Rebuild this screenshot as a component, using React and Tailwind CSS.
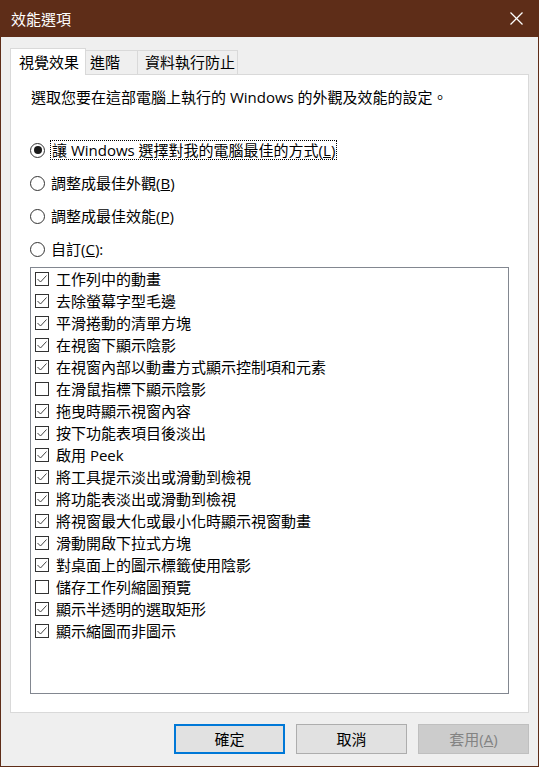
import React from "react";

const items = [
  ["工作列中的動畫", true],
  ["去除螢幕字型毛邊", true],
  ["平滑捲動的清單方塊", true],
  ["在視窗下顯示陰影", true],
  ["在視窗內部以動畫方式顯示控制項和元素", true],
  ["在滑鼠指標下顯示陰影", false],
  ["拖曳時顯示視窗內容", true],
  ["按下功能表項目後淡出", true],
  ["啟用 Peek", true],
  ["將工具提示淡出或滑動到檢視", true],
  ["將功能表淡出或滑動到檢視", true],
  ["將視窗最大化或最小化時顯示視窗動畫", true],
  ["滑動開啟下拉式方塊", true],
  ["對桌面上的圖示標籤使用陰影", true],
  ["儲存工作列縮圖預覽", false],
  ["顯示半透明的選取矩形", true],
  ["顯示縮圖而非圖示", true],
];

function Radio({ checked }) {
  return (
    <div className="w-[15px] h-[15px] rounded-full border border-[#333333] bg-white flex items-center justify-center shrink-0">
      {checked && <div className="w-[8px] h-[8px] rounded-full bg-[#1a1a1a]" />}
    </div>
  );
}

function Check({ checked }) {
  return (
    <div className="w-[14px] h-[14px] border border-[#333333] bg-white shrink-0 flex items-center justify-center">
      {checked && (
        <svg width="12" height="12" viewBox="0 0 12 12">
          <polyline points="1.5,6 4.5,9 10.5,2.5" fill="none" stroke="#444444" strokeWidth="1" />
        </svg>
      )}
    </div>
  );
}

export default function App() {
  return (
    <div className="w-[539px] h-[767px] bg-[#5e2d18] flex flex-col px-px pb-px font-['Open_Sans','Noto_Sans_CJK_TC',sans-serif] text-[15px] text-black">
      {/* Title bar */}
      <div className="h-[37px] flex items-center justify-between pl-[10px] pr-[15px] text-white shrink-0">
        <span className="leading-[20px]">效能選項</span>
        <svg width="13" height="13" viewBox="0 0 13 13">
          <line x1="0.5" y1="0.5" x2="12.5" y2="12.5" stroke="#ffffff" strokeWidth="1.2" />
          <line x1="12.5" y1="0.5" x2="0.5" y2="12.5" stroke="#ffffff" strokeWidth="1.2" />
        </svg>
      </div>
      {/* Body */}
      <div className="flex-1 bg-[#efefef] flex flex-col pt-[11px] px-[9px]">
        {/* Tabs */}
        <div className="h-[26px] flex items-end shrink-0">
          <div className="relative z-10 h-[27px] -mb-px w-[76px] bg-white border-l border-t border-r border-[#d9d9d9] flex items-start pt-[4px] pl-[8px] leading-[18px]">
            視覺效果
          </div>
          <div className="h-[24px] w-[52px] border-t border-r border-[#d9d9d9] bg-[#efefef] pl-[4px] pt-[2px] leading-[18px]">
            進階
          </div>
          <div className="h-[24px] w-[100px] border-t border-r border-[#d9d9d9] bg-[#efefef] pl-[7px] pt-[2px] leading-[18px]">
            資料執行防止
          </div>
        </div>
        {/* Panel */}
        <div className="h-[639px] bg-white border border-[#d9d9d9] flex flex-col pl-[19px] pt-[12px] shrink-0">
          <div className="ml-px leading-[20px] h-[20px] whitespace-nowrap">
            選取您要在這部電腦上執行的 Windows 的外觀及效能的設定。
          </div>
          <div className="mt-[33px] flex flex-col gap-[13px]">
            <div className="h-[20px] flex items-center gap-[5px]">
              <Radio checked />
              <span className="border border-dotted border-black px-px leading-[18px] h-[20px] whitespace-nowrap">
                讓 Windows 選擇對我的電腦最佳的方式(<u>L</u>)
              </span>
            </div>
            <div className="h-[20px] flex items-center gap-[6px]">
              <Radio />
              <span className="leading-[20px]">
                調整成最佳外觀(<u>B</u>)
              </span>
            </div>
            <div className="h-[20px] flex items-center gap-[6px]">
              <Radio />
              <span className="leading-[20px]">
                調整成最佳效能(<u>P</u>)
              </span>
            </div>
            <div className="h-[20px] flex items-center gap-[6px]">
              <Radio />
              <span className="leading-[20px]">
                自訂(<u>C</u>):
              </span>
            </div>
          </div>
          <div className="mt-[8px] w-[479px] h-[427px] border border-[#828790] bg-white flex flex-col">
            {items.map(([label, on]) => (
              <div key={label} className="h-[22px] flex items-center pl-[4px] gap-[7px] shrink-0">
                <Check checked={on} />
                <span className="leading-[20px] whitespace-nowrap">{label}</span>
              </div>
            ))}
          </div>
        </div>
        {/* Buttons */}
        <div className="mt-[11px] flex justify-end gap-[11px]">
          <button className="w-[111px] h-[30px] bg-[#e1e1e1] border-2 border-[#0078d7] leading-[20px]">
            確定
          </button>
          <button className="w-[111px] h-[30px] bg-[#e1e1e1] border border-[#adadad] leading-[20px]">
            取消
          </button>
          <button className="w-[111px] h-[30px] bg-[#cccccc] border border-[#bfbfbf] text-[#838383] leading-[20px]">
            套用(<u>A</u>)
          </button>
        </div>
      </div>
    </div>
  );
}
